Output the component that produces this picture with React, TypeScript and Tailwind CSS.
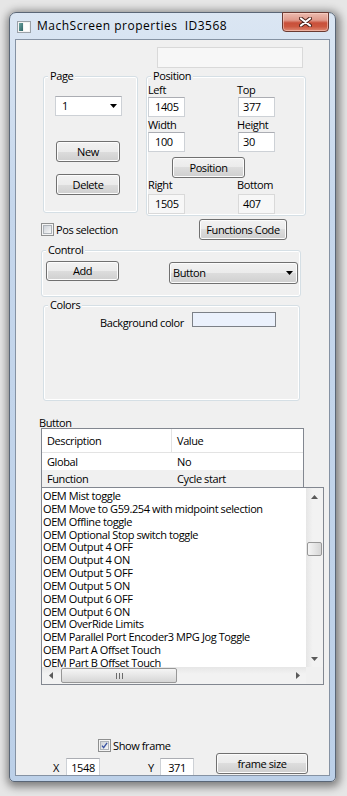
import React from "react";

const btn =
  "flex items-center justify-center rounded-[3px] border border-[#707070] bg-[linear-gradient(to_bottom,#f2f2f2_0%,#ebebeb_50%,#dddddd_50%,#cfcfcf_100%)] shadow-[inset_0_0_0_1px_#fcfcfc] text-black shrink-0";
const edit =
  "flex items-center bg-white border border-[#cdd1d6] border-t-[#abadb3] shrink-0";
const ro = "flex items-center bg-[#f7f7f7] border border-[#d9d9d9] shrink-0";

const items = [
  "OEM Mist toggle",
  "OEM Move to G59.254 with midpoint selection",
  "OEM Offline toggle",
  "OEM Optional Stop switch toggle",
  "OEM Output 4 OFF",
  "OEM Output 4 ON",
  "OEM Output 5 OFF",
  "OEM Output 5 ON",
  "OEM Output 6 OFF",
  "OEM Output 6 ON",
  "OEM OverRide Limits",
  "OEM Parallel Port Encoder3 MPG Jog Toggle",
  "OEM Part A Offset Touch",
  "OEM Part B Offset Touch",
];

function Arrow({ color = "#000" }: { color?: string }) {
  return (
    <svg width="7" height="4" viewBox="0 0 7 4">
      <path d="M0 0H7L3.5 4Z" fill={color} />
    </svg>
  );
}

function CheckBox({ checked }: { checked?: boolean }) {
  return (
    <div className="w-[13px] h-[13px] border border-[#8e8f8f] bg-[#f4f4f4] p-[1px] shrink-0">
      <div className="w-full h-full border border-[#aeb3b9] bg-[linear-gradient(135deg,#cdd2d8,#f7f7f7)] flex items-center justify-center">
        {checked && (
          <svg width="9" height="9" viewBox="0 0 9 9">
            <path d="M1.3 4.6 L3.4 7.2 L7.8 1" fill="none" stroke="#3a54a4" strokeWidth="1.7" />
          </svg>
        )}
      </div>
    </div>
  );
}

function Group({
  label,
  className,
  children,
}: {
  label: string;
  className: string;
  children?: React.ReactNode;
}) {
  return (
    <div
      className={
        "relative rounded-[3px] border border-[#d5dfe5] shadow-[inset_0_0_0_1px_#ffffff] shrink-0 " +
        className
      }
    >
      <span className="absolute -top-[8px] left-[4px] bg-[#f0f0f0] px-[2px] leading-[14px]">
        {label}
      </span>
      {children}
    </div>
  );
}

export default function App() {
  return (
    <div className="w-[347px] h-[796px] bg-[#e6e6e6] pl-[9px] pt-[12px] overflow-hidden font-['Open_Sans','Noto_Sans',sans-serif] text-[11px] leading-[14px] tracking-[-0.4px] text-black">
      <div className="w-[327px] h-[770px] rounded-t-[7px] rounded-b-[5px] border border-[#5a6676] bg-[linear-gradient(to_bottom,#dbe6f3,#c6d7ec_25%,#bcd0e8)] shadow-[1px_2px_9px_3px_rgba(0,0,0,0.45)] flex flex-col">
        {/* Title bar */}
        <div className="h-[26px] flex items-start shrink-0">
          <svg className="ml-[7px] mt-[8px] shrink-0" width="14" height="12" viewBox="0 0 14 12">
            <defs>
              <linearGradient id="ic" x1="0" y1="0" x2="1" y2="1">
                <stop offset="0" stopColor="#6fa5a3" />
                <stop offset="1" stopColor="#2d6466" />
              </linearGradient>
            </defs>
            <rect x="0.5" y="0.5" width="13" height="11" fill="#f3f3f3" stroke="#9aa1a8" />
            <rect x="2" y="2" width="4" height="8" fill="url(#ic)" />
            <rect x="7" y="2" width="5" height="8" fill="#fdfdfd" />
          </svg>
          <span className="ml-[6px] mt-[5px] whitespace-nowrap text-[12px] leading-[16px] tracking-[0.5px]">
            MachScreen properties&nbsp; ID3568
          </span>
          <div className="ml-auto mr-[6px] -mt-px w-[47px] h-[20px] rounded-b-[4px] border border-[#6a3a32] bg-[linear-gradient(to_bottom,#ecbcb0_0%,#e0998a_40%,#c9503a_55%,#cc5840_75%,#df8a74_100%)] shadow-[inset_0_0_0_1px_rgba(255,220,210,0.5)] flex items-center justify-center">
            <svg width="13" height="10" viewBox="0 0 13 10">
              <path d="M2 1.5 L11 8.5 M11 1.5 L2 8.5" stroke="#4a2019" strokeWidth="4" strokeLinecap="round" />
              <path d="M2 1.5 L11 8.5 M11 1.5 L2 8.5" stroke="#ffffff" strokeWidth="2.2" strokeLinecap="round" />
            </svg>
          </div>
        </div>

        <div className="px-[5px] pb-[5px] flex-1">
          <div className="h-[737px] border border-[#8592a3] bg-[#f0f0f0] overflow-hidden">
            {/* Block 1: top box */}
            <div className={ro + " mt-[7px] ml-[141px] w-[146px] h-[21px]"} />

            {/* Block 2: Page + Position */}
            <div className="mt-[8px] flex items-start">
              <Group label="Page" className="ml-[27px] w-[95px] h-[137px]">
                <div className={edit + " mt-[19px] ml-[11px] w-[67px] h-[20px] pl-[6px] pr-[4px] justify-between"}>
                  <span>1</span>
                  <Arrow />
                </div>
                <div className={btn + " mt-[25px] ml-[12px] w-[64px] h-[21px]"}>New</div>
                <div className={btn + " mt-[12px] ml-[12px] w-[64px] h-[21px]"}>Delete</div>
              </Group>

              <Group label="Position" className="ml-[8px] w-[160px] h-[140px]">
                <div className="pl-[1px] pt-[6px]">
                  <div className="flex">
                    <div className="w-[89px]">
                      <div className="h-[14px]">Left</div>
                      <div className={edit + " w-[37px] h-[20px] pl-[6px]"}>1405</div>
                    </div>
                    <div>
                      <div className="h-[14px]">Top</div>
                      <div className={edit + " ml-px w-[37px] h-[20px] pl-[4px]"}>377</div>
                    </div>
                  </div>
                  <div className="flex mt-[1px]">
                    <div className="w-[89px]">
                      <div className="h-[14px]">Width</div>
                      <div className={edit + " w-[37px] h-[20px] pl-[6px]"}>100</div>
                    </div>
                    <div>
                      <div className="h-[14px]">Height</div>
                      <div className={edit + " ml-px w-[37px] h-[20px] pl-[4px]"}>30</div>
                    </div>
                  </div>
                  <div className={btn + " mt-[5px] ml-[24px] w-[73px] h-[21px]"}>Position</div>
                  <div className="flex">
                    <div className="w-[89px]">
                      <div className="h-[14px]">Right</div>
                      <div className={ro + " mt-[2px] w-[37px] h-[20px] pl-[6px]"}>1505</div>
                    </div>
                    <div>
                      <div className="h-[14px]">Bottom</div>
                      <div className={ro + " mt-[2px] ml-px w-[37px] h-[20px] pl-[4px]"}>407</div>
                    </div>
                  </div>
                </div>
              </Group>
            </div>

            {/* Block 3 */}
            <div className="mt-[3px] flex items-center h-[21px]">
              <div className="ml-[25px] w-[158px] flex items-center">
                <CheckBox />
                <span className="ml-[2px]">Pos selection</span>
              </div>
              <div className={btn + " w-[88px] h-[21px]"}>Functions Code</div>
            </div>

            {/* Block 4: Control */}
            <div className="mt-[10px]">
              <Group label="Control" className="ml-[25px] w-[260px] h-[47px]">
                <div className="flex items-start">
                  <div className={btn + " mt-[10px] ml-[4px] w-[73px] h-[20px]"}>Add</div>
                  <div className={btn + " mt-[11px] ml-[50px] w-[129px] h-[22px] !justify-between pl-[3px] pr-[4px]"}>
                    <span>Button</span>
                    <Arrow />
                  </div>
                </div>
              </Group>
            </div>

            {/* Block 5: Colors */}
            <div className="mt-[8px]">
              <Group label="Colors" className="ml-[27px] w-[257px] h-[96px]">
                <div className="mt-[6px] ml-[56px] flex items-start">
                  <div className="w-[92px] mt-[4px] leading-[13px] whitespace-nowrap">Background color</div>
                  <div className="w-[84px] h-[15px] border border-[#7c8087] bg-[#ebf1fc]" />
                </div>
              </Group>
            </div>

            {/* Block 6: Button label */}
            <div className="mt-[15px] ml-[23px] h-[12px] leading-[14px]">Button</div>

            {/* Block 7: table */}
            <div className="ml-[25px] w-[263px] border-t border-l border-r border-[#828790] bg-white">
              <div className="h-[24px] flex border-b border-[#e3e3e3]">
                <div className="w-[130px] pl-[5px] flex items-center border-r border-[#e3e3e3]">Description</div>
                <div className="pl-[5px] flex items-center">Value</div>
              </div>
              <div className="h-[17px] flex">
                <div className="w-[130px] pl-[5px] flex items-center">Global</div>
                <div className="pl-[5px] flex items-center">No</div>
              </div>
              <div className="h-[17px] flex bg-[#f0f0f0]">
                <div className="w-[130px] pl-[5px] flex items-center">Function</div>
                <div className="pl-[5px] flex items-center">Cycle start</div>
              </div>
            </div>

            {/* Block 8: dropdown list */}
            <div className="ml-[25px] w-[283px] h-[198px] border border-[#828790] bg-white flex flex-col">
              <div className="h-[179px] flex">
                <div className="w-[264px] overflow-hidden pt-[2px] pl-[1px]">
                  {items.map((t) => (
                    <div key={t} className="h-[12.85px] leading-[12.85px] whitespace-nowrap">
                      {t}
                    </div>
                  ))}
                </div>
                <div className="w-[17px] bg-[linear-gradient(to_right,#e6e6e6,#f2f2f2_40%,#f2f2f2)] flex flex-col">
                  <div className="h-[17px] flex items-center justify-center">
                    <svg width="7" height="4" viewBox="0 0 7 4">
                      <path d="M0 4H7L3.5 0Z" fill="#5a5a5a" />
                    </svg>
                  </div>
                  <div className="h-[37px]" />
                  <div className="mx-[1px] h-[14px] rounded-[2px] border border-[#979797] bg-[linear-gradient(to_right,#f5f5f5,#e6e6e6_50%,#d6d6d6)]" />
                  <div className="flex-1" />
                  <div className="h-[17px] flex items-center justify-center">
                    <Arrow color="#5a5a5a" />
                  </div>
                </div>
              </div>
              <div className="h-[17px] flex">
                <div className="w-[264px] bg-[linear-gradient(to_bottom,#e6e6e6,#f2f2f2_40%,#f2f2f2)] flex items-center">
                  <div className="w-[17px] h-[17px] flex items-center justify-center">
                    <svg width="4" height="7" viewBox="0 0 4 7">
                      <path d="M4 0V7L0 3.5Z" fill="#5a5a5a" />
                    </svg>
                  </div>
                  <div className="ml-[2px] w-[116px] h-[15px] rounded-[2px] border border-[#979797] bg-[linear-gradient(to_bottom,#f5f5f5,#e6e6e6_50%,#d6d6d6)] flex items-center justify-center">
                    <svg width="7" height="6" viewBox="0 0 7 6">
                      <path d="M0.5 0V6M3.5 0V6M6.5 0V6" stroke="#6b6b6b" strokeWidth="1" />
                    </svg>
                  </div>
                  <div className="flex-1" />
                  <div className="w-[17px] h-[17px] flex items-center justify-center">
                    <svg width="4" height="7" viewBox="0 0 4 7">
                      <path d="M0 0V7L4 3.5Z" fill="#5a5a5a" />
                    </svg>
                  </div>
                </div>
                <div className="w-[17px] bg-[#f0f0f0]" />
              </div>
            </div>

            {/* Block 9: Show frame */}
            <div className="mt-[54px] ml-[82px] h-[13px] flex items-center">
              <CheckBox checked />
              <span className="ml-[2px]">Show frame</span>
            </div>

            {/* Block 10 */}
            <div className="mt-[1px] flex items-start">
              <div className="ml-[37px] mt-[5px] w-[13px] h-[14px] leading-[20px]">X</div>
              <div className={edit + " mt-[5px] w-[34px] h-[20px] justify-center"}>1548</div>
              <div className="ml-[48px] mt-[5px] w-[12px] h-[14px] leading-[20px]">Y</div>
              <div className={edit + " mt-[5px] w-[34px] h-[20px] justify-center"}>371</div>
              <div className={btn + " ml-[22px] w-[92px] h-[21px]"}>frame size</div>
            </div>
          </div>
        </div>
      </div>
    </div>
  );
}
